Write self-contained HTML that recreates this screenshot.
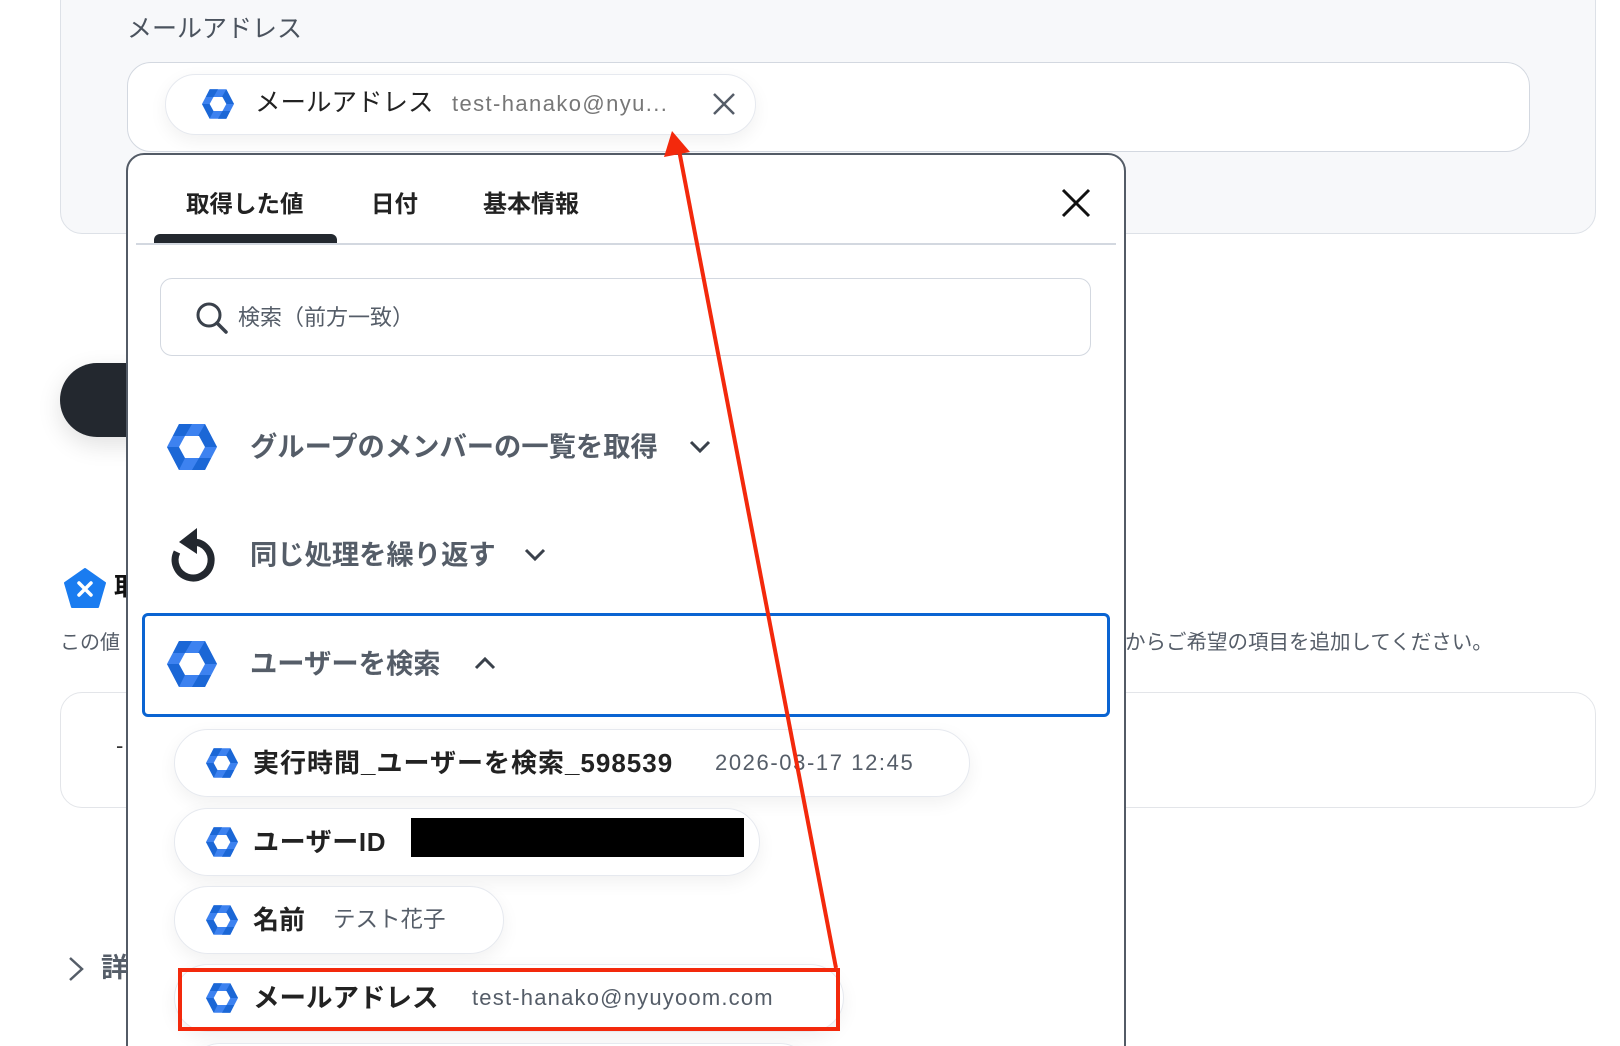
<!DOCTYPE html>
<html style="overflow:hidden"><head><meta charset="utf-8"><style>
*{box-sizing:border-box;margin:0;padding:0}
html,body{width:1620px;height:1046px;overflow:hidden}
body{background:#fff;font-family:"Liberation Sans","Noto Sans CJK JP",sans-serif;}
#w{position:relative;width:1620px;height:1046px;overflow:hidden}
.a{position:absolute}
.chip{position:absolute;background:#fff;border:1.5px solid #e6e9ef;border-radius:34px;box-shadow:0 6px 18px rgba(0,0,0,0.06);}
.t{position:absolute;white-space:nowrap;line-height:1}
</style></head><body><div id="w">
<svg width="0" height="0" style="position:absolute"><defs>
<symbol id="hx" viewBox="0 0 50 46">
<polygon points="12,0 38,0 50,23 38,46 12,46 0,23" fill="#3d82f0"/>
<polygon points="12,0 25,0 18,12 6,12" fill="#1b67d6"/>
<polygon points="38,0 50,23 38,23 31,12" fill="#1b67d6"/>
<polygon points="0,23 12,23 18,34 12,46" fill="#1b67d6"/>
<polygon points="25,46 38,46 44,34 32,34" fill="#1b67d6"/>
<polygon points="18,12 32,12 38,23 32,34 18,34 12,23" fill="#fff"/>
</symbol></defs></svg>

<div class="a" style="left:60px;top:-20px;width:1536px;height:254px;background:#f7f8fa;border:1.5px solid #dde1e7;border-radius:22px"></div>
<div class="t" style="left:127px;top:17px;font-size:25px;color:#4b535e">メールアドレス</div>
<div class="a" style="left:127px;top:62px;width:1403px;height:90px;background:#fff;border:1.5px solid #d3d8e0;border-radius:24px"></div>
<div class="chip" style="left:165px;top:74px;width:591px;height:61px;border-radius:31px"></div>
<svg class="a" style="left:202px;top:89px" width="32" height="30"><use href="#hx"/></svg>
<div class="t" style="left:255px;top:91px;font-size:25.5px;color:#222">メールアドレス</div>
<div class="t" style="left:452px;top:93px;font-size:22px;color:#777;letter-spacing:1.4px">test-hanako@nyu...</div>
<svg class="a" style="left:712px;top:92px" width="24" height="24"><path d="M2 2L22 22M22 2L2 22" stroke="#555d68" stroke-width="2.5"/></svg>

<div class="a" style="left:60px;top:363px;width:120px;height:74px;background:#23282f;border-radius:37px;box-shadow:0 8px 24px rgba(0,0,0,0.12)"></div>

<svg class="a" style="left:64px;top:568px" width="42" height="40" viewBox="0 0 42 40"><polygon points="21,1 41,15 34,39 8,39 1,15" fill="#1a7cf0" stroke="#1a7cf0" stroke-width="2" stroke-linejoin="round"/><path d="M15 15L27 27M27 15L15 27" stroke="#fff" stroke-width="3.5" stroke-linecap="round"/></svg>
<div class="t" style="left:114px;top:575px;font-size:25px;color:#111;font-weight:bold">取</div>
<div class="t" style="left:60px;top:633px;font-size:20px;color:#555d68">この値</div>
<div class="t" style="left:1125px;top:633px;font-size:20.5px;color:#555d68">からご希望の項目を追加してください。</div>
<div class="a" style="left:60px;top:692px;width:1536px;height:116px;border:1.5px solid #e3e5e9;border-radius:22px"></div>
<div class="t" style="left:116px;top:735px;font-size:22px;color:#333">-</div>
<svg class="a" style="left:68px;top:956px" width="16" height="26"><path d="M2 2L14 13L2 24" fill="none" stroke="#555d68" stroke-width="2.5"/></svg>
<div class="t" style="left:101px;top:955px;font-size:27px;color:#555d68;font-weight:bold">詳</div>

<div class="a" style="left:126px;top:153px;width:1000px;height:960px;background:#fff;border:2px solid #535b66;border-radius:18px"></div>
<div class="t" style="left:186px;top:193px;font-size:23.5px;color:#222;font-weight:bold">取得した値</div>
<div class="t" style="left:371px;top:193px;font-size:23.5px;color:#222;font-weight:bold">日付</div>
<div class="t" style="left:483px;top:193px;font-size:24px;color:#222;font-weight:bold">基本情報</div>
<div class="a" style="left:154px;top:234px;width:183px;height:9px;background:#23282f;border-radius:6px 6px 0 0"></div>
<div class="a" style="left:136px;top:243px;width:980px;height:2px;background:#d3d8e0"></div>
<svg class="a" style="left:1061px;top:188px" width="30" height="30"><path d="M2 2L28 28M28 2L2 28" stroke="#111" stroke-width="3"/></svg>

<div class="a" style="left:160px;top:278px;width:931px;height:78px;border:1.5px solid #d3d8e0;border-radius:12px"></div>
<svg class="a" style="left:195px;top:301px" width="34" height="34"><circle cx="14" cy="14" r="11" fill="none" stroke="#3a414b" stroke-width="3"/><path d="M22 22L31 31" stroke="#3a414b" stroke-width="3.5" stroke-linecap="round"/></svg>
<div class="t" style="left:238px;top:307px;font-size:22px;color:#555d68">検索（前方一致）</div>

<svg class="a" style="left:167px;top:424px" width="50" height="46"><use href="#hx"/></svg>
<div class="t" style="left:250px;top:433px;font-size:27.3px;color:#555d68;font-weight:bold">グループのメンバーの一覧を取得</div>
<svg class="a" style="left:689px;top:440px" width="22" height="14"><path d="M2 2L11 11L20 2" fill="none" stroke="#3a414b" stroke-width="3"/></svg>

<svg class="a" style="left:167px;top:526px" width="52" height="60" viewBox="0 0 52 60"><path d="M26 16 A18 18 0 1 1 10 26" fill="none" stroke="#23282f" stroke-width="7"/><polygon points="30,2 30,28 12,16" fill="#23282f"/></svg>
<div class="t" style="left:250px;top:541px;font-size:27.3px;color:#555d68;font-weight:bold">同じ処理を繰り返す</div>
<svg class="a" style="left:524px;top:548px" width="22" height="14"><path d="M2 2L11 11L20 2" fill="none" stroke="#3a414b" stroke-width="3"/></svg>

<div class="a" style="left:142px;top:613px;width:968px;height:104px;border:3.5px solid #0a64d2;border-radius:6px"></div>
<svg class="a" style="left:167px;top:641px" width="50" height="46"><use href="#hx"/></svg>
<div class="t" style="left:250px;top:650px;font-size:27.3px;color:#555d68;font-weight:bold">ユーザーを検索</div>
<svg class="a" style="left:474px;top:656px" width="22" height="14"><path d="M2 12L11 3L20 12" fill="none" stroke="#3a414b" stroke-width="3"/></svg>

<div class="chip" style="left:174px;top:729px;width:796px;height:68px"></div>
<svg class="a" style="left:206px;top:748px" width="32" height="30"><use href="#hx"/></svg>
<div class="t" style="left:253px;top:750px;font-size:26px;color:#222;font-weight:bold;letter-spacing:1px">実行時間_ユーザーを検索_598539</div>
<div class="t" style="left:715px;top:752px;font-size:22px;color:#555d68;letter-spacing:1.6px">2026-03-17 12:45</div>

<div class="chip" style="left:174px;top:808px;width:586px;height:68px"></div>
<svg class="a" style="left:206px;top:827px" width="32" height="30"><use href="#hx"/></svg>
<div class="t" style="left:253px;top:829px;font-size:26px;color:#222;font-weight:bold;letter-spacing:0.6px">ユーザーID</div>
<div class="a" style="left:411px;top:818px;width:333px;height:39px;background:#000"></div>

<div class="chip" style="left:174px;top:886px;width:330px;height:68px"></div>
<svg class="a" style="left:206px;top:905px" width="32" height="30"><use href="#hx"/></svg>
<div class="t" style="left:253px;top:907px;font-size:26px;color:#222;font-weight:bold">名前</div>
<div class="t" style="left:333px;top:909px;font-size:22.5px;color:#555d68">テスト花子</div>

<div class="chip" style="left:174px;top:964px;width:670px;height:68px"></div>
<div class="chip" style="left:190px;top:1043px;width:620px;height:60px"></div>
<div class="a" style="left:178px;top:968px;width:662px;height:63px;border:4px solid #f3290c"></div>
<svg class="a" style="left:206px;top:983px" width="32" height="30"><use href="#hx"/></svg>
<div class="t" style="left:253px;top:985px;font-size:26.5px;color:#222;font-weight:bold">メールアドレス</div>
<div class="t" style="left:472px;top:987px;font-size:22px;color:#555d68;letter-spacing:1.2px">test-hanako@nyuyoom.com</div>

<svg class="a" style="left:0;top:0" width="1620" height="1046"><line x1="836" y1="968" x2="679" y2="150" stroke="#f3290c" stroke-width="4"/><polygon points="672,131 664,157 690,152" fill="#f3290c"/></svg>
</div></body></html>
